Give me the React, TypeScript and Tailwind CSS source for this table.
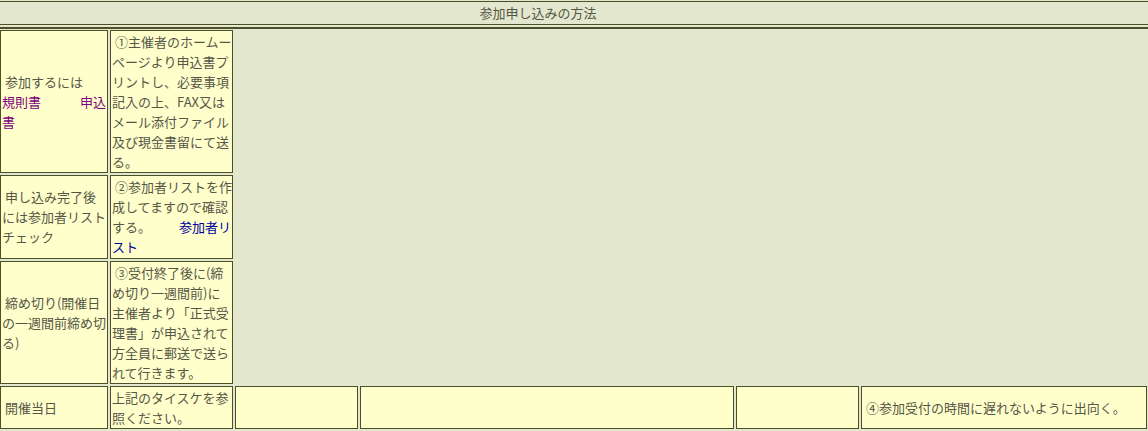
import React from "react";

const cell =
  "border border-[#4b5028] bg-[#ffffcc] p-[1px] flex flex-col justify-center leading-[20px] text-[13px]";

const L = ({ children }: { children: React.ReactNode }) => (
  <div className="whitespace-nowrap">{children}</div>
);

export default function App() {
  return (
    <div
      className="w-[1148px] h-[431px] bg-[#e2e7cd] pt-[1px] text-[#565646] overflow-hidden"
      style={{ fontFamily: '"Noto Sans CJK JP", "Noto Sans", sans-serif' }}
    >
      <div className="h-[24px] border-y border-[#4b5028] flex items-center justify-center pr-[72px] text-[13px]">
        参加申し込みの方法
      </div>
      <div className="mt-[2px] h-[2px] bg-[#4b5028]" />
      <div className="mt-[1px] flex flex-col gap-[2px]">
        <div className="flex gap-[2px] h-[143px]">
          <div className={`${cell} w-[108px]`}>
            <L>{"\u00a0参加するには"}</L>
            <div className="flex justify-between text-[#800080]">
              <span>規則書</span>
              <span>申込</span>
            </div>
            <L>
              <span className="text-[#800080]">書</span>
            </L>
          </div>
          <div className={`${cell} w-[123px]`}>
            <L>{"\u00a0①主催者のホームー"}</L>
            <L>ページより申込書プ</L>
            <L>リントし、必要事項</L>
            <L>記入の上、FAX又は</L>
            <L>メール添付ファイル</L>
            <L>及び現金書留にて送</L>
            <L>る。</L>
          </div>
        </div>
        <div className="flex gap-[2px] h-[84px]">
          <div className={`${cell} w-[108px]`}>
            <L>{"\u00a0申し込み完了後"}</L>
            <L>には参加者リスト</L>
            <L>チェック</L>
          </div>
          <div className={`${cell} w-[123px]`}>
            <L>{"\u00a0②参加者リストを作"}</L>
            <L>成してますので確認</L>
            <div className="flex justify-between">
              <span>する。</span>
              <span className="text-[#0000a0]">参加者リ</span>
            </div>
            <L>
              <span className="text-[#0000a0]">スト</span>
            </L>
          </div>
        </div>
        <div className="flex gap-[2px] h-[123px]">
          <div className={`${cell} w-[108px]`}>
            <L>{"\u00a0締め切り(開催日"}</L>
            <L>の一週間前締め切</L>
            <L>る)</L>
          </div>
          <div className={`${cell} w-[123px]`}>
            <L>{"\u00a0③受付終了後に(締"}</L>
            <L>め切り一週間前)に</L>
            <L>主催者より「正式受</L>
            <L>理書」が申込されて</L>
            <L>方全員に郵送で送ら</L>
            <L>れて行きます。</L>
          </div>
        </div>
        <div className="flex gap-[2px] h-[43px]">
          <div className={`${cell} w-[108px]`}>
            <L>{"\u00a0開催当日"}</L>
          </div>
          <div className={`${cell} w-[123px]`}>
            <L>上記のタイスケを参</L>
            <L>照ください。</L>
          </div>
          <div className={`${cell} w-[123px]`} />
          <div className={`${cell} w-[374px]`} />
          <div className={`${cell} w-[123px]`} />
          <div className={`${cell} w-[286px]`}>
            <L>{"\u00a0④参加受付の時間に遅れないように出向く。"}</L>
          </div>
        </div>
      </div>
    </div>
  );
}
